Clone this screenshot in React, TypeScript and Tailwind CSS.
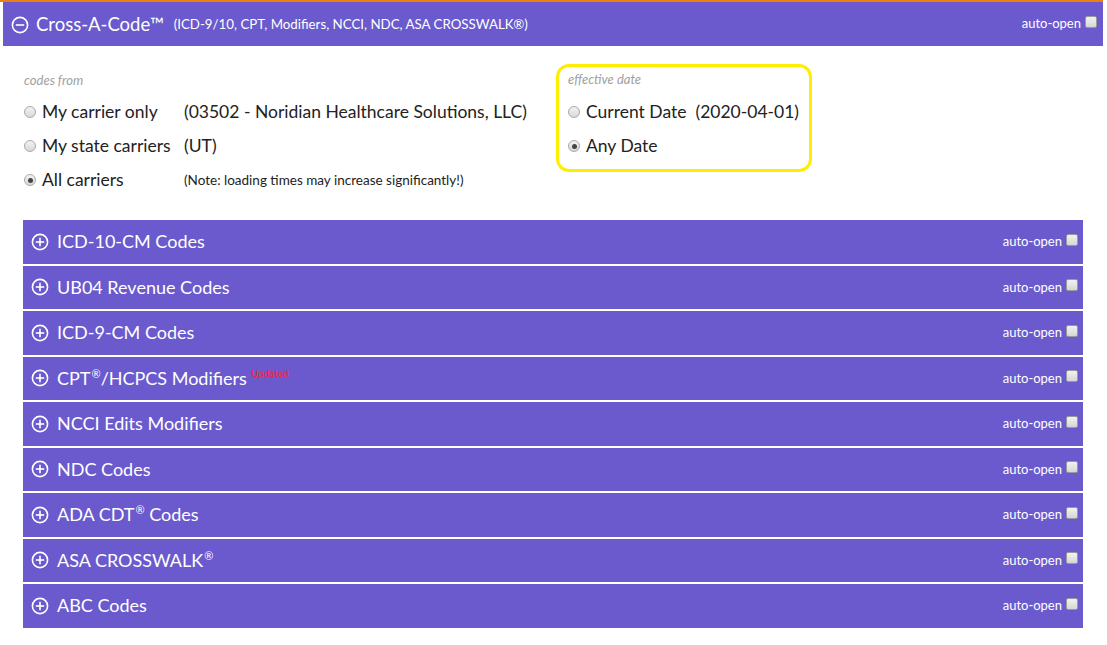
import React from "react";

// Accordion sections under the main Cross-A-Code panel
type Section = { label: React.ReactNode };

const Reg = () => <span className="relative -top-[7px] text-[11px] ml-[1px]">®</span>;

const sections: Section[] = [
  { label: "ICD-10-CM Codes" },
  { label: "UB04 Revenue Codes" },
  { label: "ICD-9-CM Codes" },
  {
    label: (
      <>
        CPT<Reg />/HCPCS Modifiers
        <span className="ml-[4px] text-[10px] text-[#ff1a3a] relative -top-[8px]">Updated</span>
      </>
    ),
  },
  { label: "NCCI Edits Modifiers" },
  { label: "NDC Codes" },
  {
    label: (
      <>
        ADA CDT<Reg /> Codes
      </>
    ),
  },
  {
    label: (
      <>
        ASA CROSSWALK<Reg />
      </>
    ),
  },
  { label: "ABC Codes" },
];

function CircleIcon({ plus }: { plus?: boolean }) {
  return (
    <svg width="18" height="18" viewBox="0 0 18 18" fill="none" stroke="white" strokeWidth="1.6">
      <circle cx="9" cy="9" r="7.6" />
      <line x1="4.8" y1="9" x2="13.2" y2="9" />
      {plus && <line x1="9" y1="4.8" x2="9" y2="13.2" />}
    </svg>
  );
}

function AutoOpen() {
  return (
    <div className="flex items-center gap-[4px] text-[13px] text-white">
      <span>auto-open</span>
      <span className="w-[12px] h-[12px] rounded-[2px] border border-[#9a9a9a] bg-gradient-to-b from-[#f2f2f2] to-[#d6d6d6] -mt-[4px]" />
    </div>
  );
}

function Radio({ checked }: { checked?: boolean }) {
  return (
    <span className="w-[12px] h-[12px] rounded-full border border-[#a9a9a9] bg-gradient-to-b from-[#f3f3f3] to-[#d9d9d9] flex items-center justify-center">
      {checked && <span className="w-[5px] h-[5px] rounded-full bg-[#444]" />}
    </span>
  );
}

function Option({ label, note, checked, noteSmall }: {
  label: string;
  note: string;
  checked?: boolean;
  noteSmall?: boolean;
}) {
  return (
    <div className="flex items-center h-[34px]">
      <Radio checked={checked} />
      <span className="ml-[6px] text-[17.5px] text-[#222] w-[142px]">{label}</span>
      <span className={noteSmall ? "text-[13.5px] text-[#222]" : "text-[17.5px] text-[#222]"}>{note}</span>
    </div>
  );
}

export default function App() {
  return (
    <div className="w-[1107px] h-[645px] bg-white" style={{ fontFamily: '"Segoe UI", Lato, "Noto Sans", sans-serif' }}>
      <div className="pl-[3px] pr-[4px]">
        <div className="h-[2px] bg-[#f07c12] -ml-[3px]" />
        <div className="h-[44px] bg-[#6a5acd] flex items-center justify-between pl-[8px] pr-[6px]">
          <div className="flex items-center mt-[1px]">
            <CircleIcon />
            <span className="ml-[7px] text-[18.5px] text-white">Cross-A-Code™</span>
            <span className="ml-[10px] text-[13.3px] text-white">(ICD-9/10, CPT, Modifiers, NCCI, NDC, ASA CROSSWALK®)</span>
          </div>
          <AutoOpen />
        </div>
      </div>

      <div className="flex pl-[24px] pt-[18px]">
        <div className="w-[532px] pt-[8px]">
          <div className="text-[13px] italic text-[#a0a0a0] leading-[16px]">codes from</div>
          <div className="mt-[7px]">
            <Option label="My carrier only" note="(03502 - Noridian Healthcare Solutions, LLC)" />
            <Option label="My state carriers" note="(UT)" />
            <Option label="All carriers" note="(Note: loading times may increase significantly!)" checked noteSmall />
          </div>
        </div>
        <div className="w-[256px] h-[108px] border-[3px] border-[#ffee00] rounded-[13px] pl-[9px] pt-[4px]">
          <div className="text-[13px] italic text-[#a0a0a0] leading-[16px]">effective date</div>
          <div className="mt-[8px]">
            <div className="flex items-center h-[34px]">
              <Radio />
              <span className="ml-[6px] text-[17.5px] text-[#222]">Current Date</span>
              <span className="ml-[9px] text-[17.5px] text-[#222]">(2020-04-01)</span>
            </div>
            <div className="flex items-center h-[34px]">
              <Radio checked />
              <span className="ml-[6px] text-[17.5px] text-[#222]">Any Date</span>
            </div>
          </div>
        </div>
      </div>

      <div className="ml-[23px] w-[1060px] mt-[23px] flex flex-col gap-[2px]">
        {sections.map((s, i) => (
          <div key={i} className="h-[43.5px] bg-[#6a5acd] flex items-center justify-between pl-[8px] pr-[5px]">
            <div className="flex items-center">
              <CircleIcon plus />
              <span className="ml-[8px] text-[18px] text-white">{s.label}</span>
            </div>
            <AutoOpen />
          </div>
        ))}
      </div>
    </div>
  );
}
